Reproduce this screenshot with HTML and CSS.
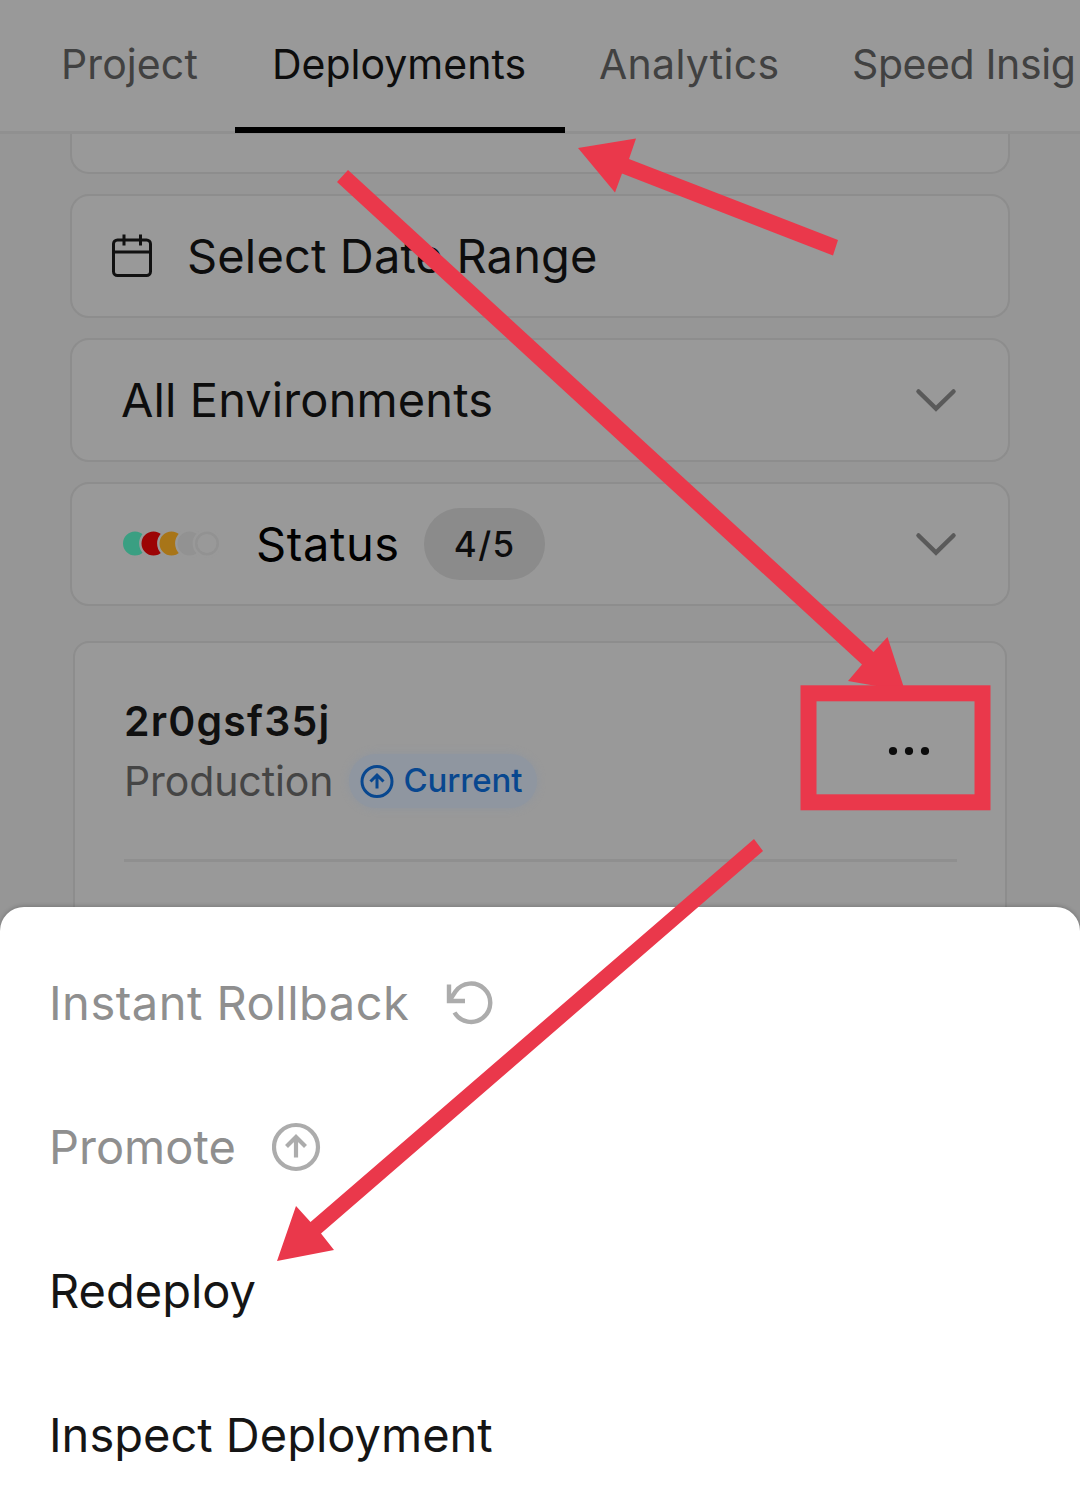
FILE: index.html
```html
<!DOCTYPE html>
<html lang="en">
<head>
<meta charset="utf-8">
<title>Deployments</title>
<link rel="stylesheet" href="styles.css">
</head>
<body>
<div class="screen">
  <nav class="tabs">
    <a class="tab tab-project"><span>Project</span></a>
    <a class="tab tab-deployments active"><span>Deployments</span></a>
    <a class="tab tab-analytics"><span>Analytics</span></a>
    <a class="tab tab-speed"><span>Speed Insig</span></a>
  </nav>
  <main class="content">
    <div class="field field-cut"></div>
    <div class="field field-date">
      <svg class="calendar" width="42" height="46" viewBox="0 0 42 46" fill="none" stroke="#111" stroke-width="3"><rect x="3.500" y="7" width="37" height="35.500" rx="4"/><path d="M3.500 19h37M14 1.500v11M30.500 1.500v11"/></svg>
      <span class="label-date">Select Date Range</span>
    </div>
    <div class="field field-select">
      <span class="label-env">All Environments</span>
      <svg class="chevron" width="42" height="26" viewBox="0 0 42 26"><path d="M3.500 4.500 21 21.500 38.500 4.500"/></svg>
    </div>
    <div class="field field-select">
      <svg class="dots" width="98" height="28" viewBox="0 0 98 28">
        <g stroke="#999" stroke-width="2.400">
          <circle cx="14" cy="13.500" r="13.200" fill="#3a9f82"/>
          <circle cx="32.500" cy="13.500" r="13.200" fill="#9c0405"/>
          <circle cx="50.500" cy="13.500" r="13.200" fill="#a87518"/>
          <circle cx="68.500" cy="13.500" r="13.200" fill="#929292"/>
          <circle cx="86" cy="13.500" r="13.200" fill="#929292"/>
        </g>
        <circle cx="86" cy="13.500" r="9.500" fill="#999"/>
      </svg>
      <span class="label-status">Status</span>
      <span class="count"><span>4/5</span></span>
      <svg class="chevron" width="42" height="26" viewBox="0 0 42 26"><path d="M3.500 4.500 21 21.500 38.500 4.500"/></svg>
    </div>
    <section class="deployment">
      <div class="summary">
        <div class="info">
          <div class="name"><span>2r0gsf35j</span></div>
          <div class="meta">
            <span class="env">Production</span>
            <span class="current">
              <svg width="34" height="34" viewBox="0 0 34 34" fill="none" stroke="#08478f" stroke-width="3"><circle cx="17" cy="17.500" r="15"/><path d="M17 24.500V11M10.500 17.500 17 11 23.500 17.500"/></svg>
              <span class="t-current">Current</span>
            </span>
          </div>
        </div>
        <svg class="more" width="42" height="10" viewBox="0 0 42 10" fill="#0c0c0c"><circle cx="5" cy="5" r="4.100"/><circle cx="21" cy="5" r="4.100"/><circle cx="37" cy="5" r="4.100"/></svg>
      </div>
    </section>
  </main>
  <div class="sheet">
    <div class="item muted"><span class="t-rollback">Instant Rollback</span>
      <svg class="i-rollback" width="50" height="50" viewBox="0 0 50 50" fill="none" stroke="#acacac" stroke-width="4.400"><path d="M4 6.500v16.500h16M4.500 22.500 10.500 13.500A19.200 19.200 0 1 1 9.500 34.500"/></svg>
    </div>
    <div class="item muted"><span class="t-promote">Promote</span>
      <svg class="i-promote" width="50" height="50" viewBox="0 0 50 50" fill="none" stroke="#acacac" stroke-width="4.200"><circle cx="24" cy="25" r="22"/><path d="M24 35.500V15.500M14.500 24.500 24 15l9.500 9.500"/></svg>
    </div>
    <div class="item"><span class="t-redeploy">Redeploy</span></div>
    <div class="item"><span class="t-inspect">Inspect Deployment</span></div>
  </div>
  <svg class="annotations" width="1080" height="1500" viewBox="0 0 1080 1500" fill="#ea384b">
    <path d="M578 148 636 138.500 629 159 838 240 833 255.500 622 173.500 615 192.500Z"/>
    <path d="M348 170 873.500 652 887.500 637 905 691 848 681 862 664.500 337 182Z"/>
    <path d="M754 839 763 851 321 1233.500 334 1250 277 1261 296 1206 310.500 1222Z"/>
    <rect x="808.500" y="693.300" width="174" height="109" fill="none" stroke="#ea384b" stroke-width="16"/>
  </svg>
</div>
</body>
</html>
```
FILE: styles.css
```css
* { box-sizing: border-box; }
body { margin: 0; font-family: Inter, "Liberation Sans", sans-serif; }
.screen {
  position: relative;
  width: 1080px;
  height: 1500px;
  overflow: hidden;
  display: flex;
  flex-direction: column;
  background: #969696;
}
span { white-space: nowrap; }
svg { flex: none; }

.tabs {
  flex: none;
  height: 134px;
  display: flex;
  padding-left: 24px;
  background: #999;
  border-bottom: 3px solid #909090;
}
.tab {
  flex: none;
  height: 133px;
  padding: 0 0 6px 37px;
  display: flex;
  align-items: center;
  font-size: 41px;
  letter-spacing: .1px;
  color: #414141;
}
.tab-project { width: 211px; }
.tab-deployments { width: 330px; letter-spacing: 0; }
.tab-analytics { width: 250px; padding-left: 34px; letter-spacing: .3px; }
.tab-speed { letter-spacing: -.4px; }
.active { color: #0d0d0d; border-bottom: 6px solid #000; padding-bottom: 0; }

.content {
  flex: none;
  height: 773px;
  overflow: hidden;
  display: flex;
  flex-direction: column;
  padding: 0 70px;
}
.field {
  flex: none;
  height: 124px;
  margin-bottom: 20px;
  border: 2px solid #8d8d8d;
  border-radius: 19px;
  background: #999;
  display: flex;
  align-items: center;
  font-size: 47px;
  color: #0d0d0d;
}
.field-cut { height: 40px; border-top: 0; border-radius: 0 0 19px 19px; }
.field-date { padding-left: 38px; }
.calendar { margin-right: 35px; }
.field-select { padding: 0 51px 0 49px; }
.label-date, .label-env, .label-status { padding-bottom: 2px; }
.label-date { letter-spacing: .15px; }
.label-env { letter-spacing: .1px; }
.label-status { color: #000; letter-spacing: .6px; }
.chevron { margin-left: auto; fill: none; stroke: #5a5a5a; stroke-width: 4.5; stroke-linecap: round; }
.dots { margin-right: 37px; }
.count {
  margin-left: 24.5px;
  width: 121px;
  height: 72px;
  border-radius: 36px;
  background: #8b8b8b;
  display: flex;
  align-items: center;
  justify-content: center;
  font-size: 35px;
  font-weight: 500;
  letter-spacing: 1.4px;
}

.deployment {
  flex: none;
  height: 300px;
  margin: 15px 3px 0;
  border: 2px solid #8d8d8d;
  border-radius: 16px;
  background: #999;
  padding: 0 48px 0 49px;
}
.summary {
  height: 219px;
  border-bottom: 3px solid #8f8f8f;
  display: flex;
  align-items: center;
  justify-content: space-between;
}
.name { height: 60px; line-height: 60px; font-size: 41px; font-weight: 600; letter-spacing: 1.2px; color: #101010; }
.meta { height: 60px; display: flex; align-items: center; font-size: 41px; color: #454545; }
.env { letter-spacing: -.1px; }
.current {
  margin-left: 16px;
  width: 188px;
  height: 54px;
  padding-left: 11px;
  border-radius: 27px;
  background: #8f96a0;
  box-shadow: 0 0 8px #8f96a0;
  display: flex;
  align-items: center;
  gap: 9px;
  font-size: 33px;
  font-weight: 500;
  color: #08478f;
}
.t-current { padding-bottom: 2px; letter-spacing: -.15px; }
.more { margin-right: 27px; }

.sheet {
  flex: 1;
  padding: 24px 49px 0;
  background: #fff;
  border-radius: 24px 24px 0 0;
  box-shadow: 0 -1px 4px rgba(0, 0, 0, .2);
}
.item { height: 144px; display: flex; align-items: center; font-size: 47px; color: #151515; }
.item span { padding-bottom: 2px; }
.muted { color: #8f8f8f; }
.item svg { margin-left: 36px; }
.t-rollback { letter-spacing: .5px; }

.annotations { position: absolute; inset: 0; }
```
